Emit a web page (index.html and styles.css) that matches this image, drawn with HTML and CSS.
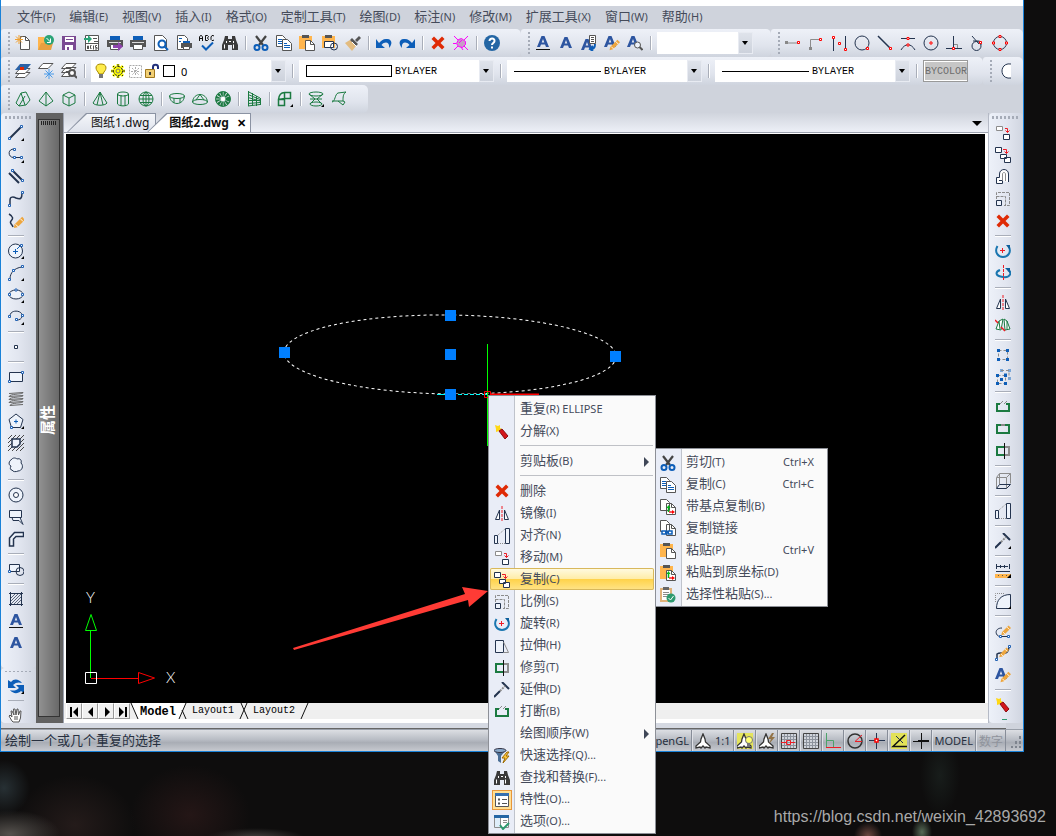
FILE: index.html
```html
<!DOCTYPE html>
<html lang="zh-CN">
<head>
<meta charset="utf-8">
<title>图纸2.dwg</title>
<link rel="stylesheet" href="styles.css">
</head>
<body>
<svg class="defs" aria-hidden="true">
<symbol id="tri" viewBox="0 0 16 16"><path d="M16 13v3h-3z"/></symbol>
<symbol id="new" viewBox="0 0 16 16"><path class="kd fw" d="M5.500 1.500h5l4 4v9h-9z"/><path class="kd" d="M10.500 1.500v4h4"/><path class="ko" d="M4 0v9M0 4.500h8M1 1.500l6 6M7 1.500l-6 6"/></symbol>
<symbol id="open" viewBox="0 0 16 16"><path class="fo" d="M0 2h6l2 2v3h5v3l-2 5H0z"/><path fill="#e8a040" d="M3 8h12l-2 7H0z"/><circle cx="11" cy="5" r="5" fill="#2ba478"/><path class="kw" d="M8.500 3l4 4M12.500 3.500V7.500H9"/></symbol>
<symbol id="save" viewBox="0 0 16 16"><path fill="#7a4a92" d="M1 1h14v14H1z"/><path class="fw" d="M4 2h9v5H4zM4 10h8v5H4z"/><path fill="#7a4a92" d="M5 4h7v1H5zM6 12h2v3H6z"/></symbol>
<symbol id="acis" viewBox="0 0 16 16"><path class="kd fw" d="M1.500 8V.500h13v15h-13z"/><path class="kd" d="M9 3.500h4M10 6.500h4M1 8.500h14"/><path class="kd" d="M3.500 14v-3h1v3M7.500 10.500h-1v3h1M9.500 10.500v4M13 10.500h-1.500v2H13v1.500h-2"/><path fill="#2ba478" d="M0 3h4V0l4 4-4 4V5H0z"/></symbol>
<symbol id="print" viewBox="0 0 16 16"><path fill="#555" d="M0 5h16v7H0z"/><path class="fb" d="M3 1h10v4H3z"/><path class="fw kd" d="M3.500 9.500h9v5h-9z"/><path fill="#ddd" d="M2 7h12v1H2z"/></symbol>
<symbol id="plot" viewBox="0 0 16 16"><use href="#print"/><path fill="#8e44ad" d="M6 10h5V7l5 4.500L11 16v-3H6z"/></symbol>
<symbol id="preview" viewBox="0 0 16 16"><path class="kd fw" d="M1.500.500h8l4 4v11h-12z"/><circle class="kb fw" cx="9" cy="9" r="3.500" stroke-width="2"/><path class="kb" stroke-width="2" d="M11.500 11.500L15 15"/></symbol>
<symbol id="publish" viewBox="0 0 16 16"><path class="kd fw" d="M1.500.500h7l3 3v11h-10z"/><path class="kb" d="M3 3.500h3M3 6.500h2"/><path fill="#555" d="M5 8h11v5H5z"/><path class="fb" d="M7 6h7v2H7z"/><path class="kd fw" d="M7.500 11.500h6v3h-6z"/></symbol>
<symbol id="spell" viewBox="0 0 16 16"><path class="kx" d="M.500 6V2l1-1.500h1l1 1.500v4M.500 3.500h3M6.500.500h2l1 1-1 1.500 1 1.500-1 1h-2zM15 1l-1-.500h-1L12 2v2.500l1 1h1l1-.500"/><path class="kb" stroke-width="2" d="M3 10.500l4 4 7-7"/></symbol>
<symbol id="find" viewBox="0 0 16 16"><path class="fk" d="M3 1h3v3h4V1h3l1 4 2 5v5h-6v-5H6v5H0v-5l2-5z"/><path class="kw" d="M2.500 9.500v4M11.500 9.500v4M7 6.500h2M4.500 6v2M11.500 6v2"/></symbol>
<symbol id="cut" viewBox="0 0 16 16"><path stroke="#444" fill="none" stroke-width="2.200" d="M3 1l7 9M13 1L6 10"/><circle class="kb" cx="4" cy="12.500" r="2.500" stroke-width="2"/><circle class="kb" cx="12" cy="12.500" r="2.500" stroke-width="2"/></symbol>
<symbol id="copy" viewBox="0 0 16 16"><path class="kd fw" d="M.500.500h6l3 3v8h-9z"/><path class="kb" d="M2 4.500h4M2 6.500h4M2 8.500h4"/><path class="kd fw" d="M6.500 4.500h5l4 4v7h-9z"/><path class="kb" d="M8 8.500h3M8 10.500h6M8 12.500h6"/></symbol>
<symbol id="paste" viewBox="0 0 16 16"><path class="fo" d="M0 1h13v13H0z"/><path fill="#555" d="M3 0h7v3H3z"/><path class="kd fw" d="M6.500 5.500h5l4 4v6h-9z"/><path class="kd" d="M11.500 5.500v4h4"/></symbol>
<symbol id="pasteblk" viewBox="0 0 16 16"><path class="fo" d="M0 1h13v12H0z"/><path fill="#555" d="M3 0h7v3H3z"/><path class="kn fw" d="M2.500 6.500h9v6h-9z"/><circle class="kn" cx="12" cy="11.500" r="3.500"/></symbol>
<symbol id="brush" viewBox="0 0 16 16"><path fill="#e3bc80" d="M0 8l5-3 6 6-4 5z"/><path fill="#555" d="M5 5l2-2 6 6-2 2zM10 5l4-4 2 2-4 4z"/><path class="kw" d="M7 7l5 5"/></symbol>
<symbol id="undo" viewBox="0 0 16 16"><path class="fb" d="M0 4v9h9L5.500 10C9 6 14 7 13 13c4-4 3-10-3-9-3 0-5 2-7 4z"/></symbol>
<symbol id="redo" viewBox="0 0 16 16"><use href="#undo" transform="matrix(-1 0 0 1 16 0)"/></symbol>
<symbol id="del" viewBox="0 0 16 16"><path class="fr" d="M1.500 4l2.500-2.500 4 4 4-4L14.500 4l-4 4 4 4-2.500 2.500-4-4-4 4L1.500 12l4-4z"/></symbol>
<symbol id="purge" viewBox="0 0 16 16"><g stroke="#f0f" fill="none"><path fill="#c79cc7" d="M5.500 4.500l3-1 4 3v3l-3 3-4-1-2-3z"/><path d="M1 1l4 4M15 1l-4 4M1 15l4-4M15 15l-4-4M0 8.500h3M8 12l2 3M6 8l3-3"/></g></symbol>
<symbol id="help" viewBox="0 0 16 16"><circle cx="8" cy="8" r="8" fill="#2466a4"/><path class="kw" stroke-width="2" d="M5.500 6C5.500 2.500 11 3 10.500 6c0 2-2.500 2-2.500 4M8 11.500v2"/></symbol>
<symbol id="A" viewBox="0 0 16 16"><path fill="#2d55a0" fill-rule="evenodd" d="M6.500 2h3L14 13h-3l-1-2.500H6L5 13H2zM8 5L6.700 8.500h2.600z"/></symbol>
<symbol id="Au" viewBox="0 0 16 16"><use href="#A" y="-1"/><path class="kx" d="M1 14.500h14"/></symbol>
<symbol id="pen" viewBox="0 0 16 16"><path fill="#eda63f" d="M4 15l1-4 8-8 3 3-8 8z"/><path stroke="#fff" d="M6 11l3 3M11 5l3 3"/></symbol>
<symbol id="Aedit" viewBox="0 0 16 16"><use href="#A" x="-2" y="-1"/><use href="#pen" x="2" y="2" width="14" height="14"/></symbol>
<symbol id="Alist" viewBox="0 0 16 16"><use href="#A" x="-2" y="2"/><path class="kd fw" d="M8.500.500h6v8h-6z"/><path class="kd" d="M10 2.500h3M10 4.500h3M10 6.500h3"/><path class="kb" stroke-width="2" d="M14 9c0 4-1 5-4 5M12 11l-3 3 3 2"/></symbol>
<symbol id="Afind" viewBox="0 0 16 16"><use href="#A" x="-2" y="-1"/><circle class="kd fl" cx="10.500" cy="10" r="3"/><path class="kd" stroke-width="2" d="M12.500 12l3 3"/></symbol>
<symbol id="o1" viewBox="0 0 16 16"><path stroke="#888" d="M1 8h12"/><path fill="#888" d="M0 6h3v3H0z"/><path class="nr" d="M12.500 6.500h2v2h-2z"/></symbol>
<symbol id="o2" viewBox="0 0 16 16"><path class="kk" d="M2.500 13V4.500H12"/><path fill="#888" d="M1 12h3v3H1z"/><path class="nr" d="M11.500 3.500h2v2h-2z"/></symbol>
<symbol id="o3" viewBox="0 0 16 16"><path class="kn" d="M2.500 2v14M14.500 1v14"/><path class="nr" d="M1.500 1.500h2v2h-2zM7.500 7.500h2v2h-2zM13.500 13.500h2v2h-2z"/></symbol>
<symbol id="o4" viewBox="0 0 16 16"><circle class="kn" cx="8" cy="8" r="7"/><path class="nr" d="M12.500 12.500h2v2h-2z"/></symbol>
<symbol id="o5" viewBox="0 0 16 16"><path class="kn" stroke-width="1.500" d="M1 1l12 12"/><path class="nr" d="M12.500 12.500h2v2h-2z"/></symbol>
<symbol id="o6" viewBox="0 0 16 16"><path class="kn" d="M1 3.500h14M1 15c4-7 10-7 14 0"/><path class="nr" d="M7 2.500h2v2H7zM7 9h2v2H7z"/></symbol>
<symbol id="o7" viewBox="0 0 16 16"><circle class="kn" cx="8" cy="8" r="7"/><path class="nr" d="M7 7h2v2H7z"/></symbol>
<symbol id="o8" viewBox="0 0 16 16"><path class="kn" d="M7.500 1v12M0 13.500h16"/><path class="kk" d="M8 9.500h3.500V13"/><path class="nr" d="M6.500 12.500h2v2h-2z"/></symbol>
<symbol id="o9" viewBox="0 0 16 16"><circle class="kn" cx="7.500" cy="11" r="4.500"/><path class="kn" d="M3 1l7 8M4 6h5c3 0 3 2 3 4"/><path class="nr" d="M10.500 6.500h2v2h-2z"/></symbol>
<symbol id="o10" viewBox="0 0 16 16"><circle class="kn" cx="8" cy="8" r="6.500"/><path class="nr" d="M7 .500h2v2H7zM7 13.500h2v2H7zM.500 7h2v2h-2zM13.500 7h2v2h-2z"/></symbol>
<symbol id="arc2" viewBox="0 0 16 16"><path class="kn fw" d="M14 1C2 -1 2 17 14 15"/></symbol>
<symbol id="lay1" viewBox="0 0 16 16"><path class="kd fw" d="M5 9.500h10l-5 5H.500z"/><path class="kd fw" d="M5 5.500h10l-5 5H.500z"/><path fill="#2a62a6" d="M5 1h11l-5 6H0z"/><path class="fr" d="M5 4h4v3H5z"/></symbol>
<symbol id="lay2" viewBox="0 0 16 16"><path class="kd fw" d="M5 .500h10l-5 5H.500z"/><path stroke="#4a9be8" d="M11 6v10M6 11h10M7.500 7.500l7 7M14.500 7.500l-7 7"/></symbol>
<symbol id="lay3" viewBox="0 0 16 16"><path class="kd fw" d="M5 8.500h9l-5 5H.500zM5 4.500h10l-5 5H.500zM5 .500h10l-5 5H.500z"/><circle class="kd fw" cx="11" cy="10" r="3" stroke-width="2"/><path class="kd" stroke-width="2" d="M13 12l3 3"/></symbol>
<symbol id="bulb" viewBox="0 0 16 16"><path fill="#ffec4a" stroke="#a88a00" d="M8 1c-6 0-6 5-3 8l1 2h4l1-2c3-3 3-8-3-8z"/><path fill="#777" d="M6 11h4v4H6z"/></symbol>
<symbol id="sun" viewBox="0 0 16 16"><path stroke="#ff0" stroke-width="3" d="M8 1v14M1 8h14M3 3l10 10M13 3L3 13"/><circle cx="8" cy="8" r="4.500" fill="#ff0" stroke="#222" stroke-dasharray="3 1"/><path stroke="#222" d="M8 1v2M8 13v2M1 8h2M13 8h2M3 3l1 1M12 12l1 1M13 3l-1 1M3 13l1-1"/><circle cx="8" cy="8" r="2" fill="#ff0" stroke="#777"/></symbol>
<symbol id="vp" viewBox="0 0 16 16"><path stroke="#aaa" stroke-dasharray="2 1" fill="none" d="M2.500 2.500h12v12h-12zM8.500 4v9M4 8.500h9M5 5l7 7M12 5l-7 7"/></symbol>
<symbol id="lock" viewBox="0 0 16 16"><path fill="none" stroke="#22307a" stroke-width="2" d="M9 8V4c0-3 5-3 5 0v2"/><path fill="#f2cf74" stroke="#a07820" d="M1.500 6.500h9v8h-9z"/><path class="fk" d="M5 9h2v3H5z"/></symbol>
<symbol id="s1" viewBox="0 0 16 16"><path class="kg" d="M1 12L6 2l5-1 4 8-4 5-7 1zM6 2l4 12M4 15L10 5"/></symbol>
<symbol id="s2" viewBox="0 0 16 16"><path class="kg" d="M8 1L1 10l7 5 7-5zM8 1v14"/></symbol>
<symbol id="s3" viewBox="0 0 16 16"><path class="kg" d="M8 1l6 3v8l-6 3-6-3V4zM2 4l6 3 6-3M8 7v8"/></symbol>
<symbol id="s4" viewBox="0 0 16 16"><path class="kg" d="M8 1L1 12c2 3 12 3 14 0zM8 1L5 14M8 1l3 13"/></symbol>
<symbol id="s5" viewBox="0 0 16 16"><path class="kg" d="M2.500 3v10c2 2.500 9 2.500 11 0V3M6 4v11M10 4v11"/><ellipse class="kg" cx="8" cy="3" rx="5.500" ry="2"/></symbol>
<symbol id="s6" viewBox="0 0 16 16"><circle class="kg" cx="8" cy="8" r="7"/><ellipse class="kg" cx="8" cy="8" rx="3" ry="7"/><path class="kg" d="M8 1v14M1 8h14M2 4.500h12M2 11.500h12"/></symbol>
<symbol id="s7" viewBox="0 0 16 16"><ellipse class="kg" cx="8" cy="5" rx="7.500" ry="2.500"/><path class="kg" d="M.500 5c1 10 14 10 15 0M5 7v5M11 7v5"/></symbol>
<symbol id="s8" viewBox="0 0 16 16"><ellipse class="kg" cx="8" cy="11" rx="7.500" ry="2.500"/><path class="kg" d="M.500 11c1-10 14-10 15 0M8 3.500L4 9M8 3.500L12 9"/></symbol>
<symbol id="s9" viewBox="0 0 16 16"><circle class="kg" cx="8" cy="8" r="5" stroke-width="5" stroke-dasharray="2 .600"/><circle class="kg" cx="8" cy="8" r="7.400"/><circle cx="8" cy="8" r="2" class="fw"/></symbol>
<symbol id="s10" viewBox="0 0 16 16"><path class="kg" d="M2.500 0v15M6.500 2v13M10.500 5v10M14.500 7v7M2 .500l12 6.500M2 3.500l12 5M2 6.500l12 3.500M2 9.500h12M2 12.500l12-1M2 15l12-1.500"/></symbol>
<symbol id="s11" viewBox="0 0 16 16"><path class="kg" stroke-width="1.500" d="M1.500 8.500h6v6h-6zM1.500 8.500C2 4 4 1.500 7.500 1.500h6v6h-6zM7.500 8.500v-7"/><path d="M16 13v3h-3z"/></symbol>
<symbol id="s12" viewBox="0 0 16 16"><ellipse class="kg" cx="8" cy="3" rx="7" ry="2"/><path class="kg" d="M1 3l6 5-5 5M15 3L9 8l5 5M2 8h12"/><ellipse class="kg" cx="8" cy="13" rx="6" ry="2"/></symbol>
<symbol id="s13" viewBox="0 0 16 16"><path class="kg" d="M1 11c3 0 3-8 6-9l8-1c-3 2-3 5-3 9H1M7 10l5 4 2-3-2-1"/></symbol>
<symbol id="line" viewBox="0 0 16 16"><path class="kn" stroke-width="2" d="M2 13L13 2"/><path class="nd" d="M.500 12.500h2v2h-2zM12.500.500h2v2h-2z"/><path d="M16 13v3h-3z"/></symbol>
<symbol id="pline" viewBox="0 0 16 16"><path class="kn" d="M6 2C-1 2 0 11 6 10.500h8"/><path class="nd" d="M5.500 1.500h2v2h-2zM5.500 9.500h2v2h-2zM12.500 9.500h2v2h-2z"/><path d="M16 13v3h-3z"/></symbol>
<symbol id="mline" viewBox="0 0 16 16"><path class="kn" stroke-width="2" d="M1 4l10 10M4 1l10 10"/><path class="nd" d="M3.500.500h2v2h-2zM13.500 10.500h2v2h-2z"/></symbol>
<symbol id="spline" viewBox="0 0 16 16"><path class="kn" stroke-width="1.500" d="M2 14V9c0-4 4-3 6-2 5 2 6 0 6-5"/><path class="nd" d="M.500 13.500h2v2h-2zM13.500.500h2v2h-2z"/></symbol>
<symbol id="sketch" viewBox="0 0 16 16"><path class="kn" stroke-width="1.500" d="M1 1c5 3 4 5 2 7s1 3 2 6"/><use href="#pen" x="2" y="1" width="15" height="15"/></symbol>
<symbol id="circ" viewBox="0 0 16 16"><circle class="kn fl" cx="7.500" cy="8" r="7"/><path class="kb" d="M5 8.500h5M7.500 6v5M9 6l4-4"/><path class="nd" d="M12.500 1.500h2v2h-2z"/><path d="M16 13v3h-3z"/></symbol>
<symbol id="arc" viewBox="0 0 16 16"><path class="kn" d="M2 14C2 8 6 3 14 2"/><path class="nd" d="M.500 13.500h2v2h-2zM4.500 4.500h2v2h-2zM13.500.500h2v2h-2z"/><path d="M16 13v3h-3z"/></symbol>
<symbol id="ell" viewBox="0 0 16 16"><ellipse class="kn fl" cx="8" cy="7.500" rx="7" ry="4.500"/><path class="nd" d="M7 2h2v2h-2zM.500 6.500h2v2h-2zM13.500 6.500h2v2h-2z"/><path d="M16 13v3h-3z"/></symbol>
<symbol id="earc" viewBox="0 0 16 16"><path class="kn" d="M2 7c0-7 13-6 12 0 0 3-3 4-5 4"/><path class="nd" d="M.500 6.500h2v2h-2zM13.500 5.500h2v2h-2zM7.500 9.500h2v2h-2z"/><path d="M16 13v3h-3z"/></symbol>
<symbol id="pt" viewBox="0 0 16 16"><path class="kn fw" d="M6.500 6.500h3v3h-3z"/></symbol>
<symbol id="rect" viewBox="0 0 16 16"><path class="kn fl" d="M1.500 3.500h13v9h-13z"/><path class="nd" d="M.500 11.500h2v2h-2zM13.500 2.500h2v2h-2z"/></symbol>
<symbol id="helix" viewBox="0 0 16 16"><path stroke="#666" fill="none" d="M1 2.500l14-1c1 2-13 1-14 4l14-1c1 2-13 1-14 4l14-1c1 2-13 1-14 4l14-1c1 2-13 1-13 4l13-1"/></symbol>
<symbol id="poly" viewBox="0 0 16 16"><path class="kn fl" d="M8 1l7 5.500L12.500 14.500h-9L1 6.500z"/><path class="kb" d="M6 8.500h4M8 6.500v4"/><path class="nd" d="M2.500 13.500h2v2h-2z"/><path d="M16 13v3h-3z"/></symbol>
<symbol id="region" viewBox="0 0 16 16"><path stroke="#444" fill="none" d="M0 4l4-4M0 8l8-8M0 12L12 0M0 16L16 0M4 16L16 4M8 16l8-8M12 16l4-4"/><path class="kn fl" stroke-width="1.500" d="M4 4h8v5l-3 3H4z"/></symbol>
<symbol id="cloud" viewBox="0 0 16 16"><path class="kn fl" d="M3 3c2-3 5-2 6-1 3-1 5 1 4 4 3 3 1 8-3 8-2 1-5 1-6-1-2 0-2-2-1-4-3-1-2-5 0-6z"/></symbol>
<symbol id="donut" viewBox="0 0 16 16"><circle class="kn fl" cx="8" cy="8" r="7"/><circle class="kn fw" cx="8" cy="8" r="2.500"/></symbol>
<symbol id="solid" viewBox="0 0 16 16"><path class="kn fl" d="M1.500 1.500h12v7h-12zM4 8.500l1 3h6l4 4-3-7"/></symbol>
<symbol id="wall" viewBox="0 0 16 16"><path class="kn fl" stroke-width="1.500" d="M1.500 15V7l5-5.500h9v4H8L5.500 8v7z"/></symbol>
<symbol id="bnd" viewBox="0 0 16 16"><path class="kn fl" d="M1.500 3.500h10v7h-10z"/><circle class="kn" cx="12" cy="10.500" r="4"/><path class="nd" d="M.500 9.500h2v2h-2z"/></symbol>
<symbol id="hatch" viewBox="0 0 16 16"><path class="kn" d="M2.500 1v14M13.500 1v14M1 2.500h14M1 13.500h14"/><path stroke="#5a667c" d="M3 7l4-4M3 10l7-7M3 13l10-10M6 13l7-7M9 13l4-4"/></symbol>
<symbol id="sync" viewBox="0 0 16 16"><path class="fb" d="M0 2v8h8L5 7c3-3 6-3 9-2-3-4-8-5-11-1z"/><path class="fb" d="M16 15V7H8l3 3c-3 3-6 3-9 2 3 4 8 4 11 1z"/></symbol>
<symbol id="hand" viewBox="0 0 16 16"><path class="kd fw" d="M4 14L1 9l1-1 2 2-1-6h1l2 4-.500-6h1.500l1 6 1-6h1l.500 6L12 4h1l-.500 7L11 15H5zM7 9v4M9 9v4"/></symbol>
<symbol id="move" viewBox="0 0 16 16"><path class="kk fw" d="M1.500 1.500h6v4h-6z"/><path class="kn fw" d="M8.500 9.500h6v5h-6z"/><path class="kr" d="M10 3.500h2.500v4M10.500 5.500l2 2 2-2"/></symbol>
<symbol id="cpy" viewBox="0 0 16 16"><path class="kn fw" d="M.500.500h6v5h-6zM5.500 7.500h6v4h-6zM9.500 10.500h6v5h-6z"/><path class="kr" d="M8 2.500h3.500v4M9.500 4.500l2 2 2-2"/></symbol>
<symbol id="offset" viewBox="0 0 16 16"><path class="kn fw" d="M13.500 13V5c0-6-9-6-9 0v3.500h-3v6h6v-3H4"/><path class="kk" d="M10.500 12V5c0-2-3-2-3 0v6.500"/></symbol>
<symbol id="scale" viewBox="0 0 16 16"><path class="kk" stroke-dasharray="3 1" d="M1.500 8V1.500h13v13H9M1.500 5.500h9v9"/><path class="kn fl" d="M1.500 9.500h5v5h-5z"/></symbol>
<symbol id="rot" viewBox="0 0 16 16"><path class="kt" stroke-width="2" d="M2.500 3C-1 9 3 14 8 14s9-5 5.500-11"/><path class="ft" d="M11 2h4v5z"/><path class="kr" d="M5 7.500h5M7.500 5v5"/></symbol>
<symbol id="rot3" viewBox="0 0 16 16"><path class="kt" stroke-width="2" d="M5 5C0 7 0 11 8 12s9-5 5-7"/><path class="ft" d="M10 3h5v5z"/><path class="kr" stroke-dasharray="3 1" d="M8.500 0v16"/></symbol>
<symbol id="mirror" viewBox="0 0 16 16"><path class="kn fw" d="M5.500 4v9.500h-4zM10.500 4v9.500h4z"/><path class="kr" stroke-dasharray="3 1" d="M8 0v16"/></symbol>
<symbol id="mir3" viewBox="0 0 16 16"><path class="kg fw" d="M1 12l3-8 4-2-2 11zM15 12l-3-8-3-2 1 11zM4 4l1 8M12 4l0 8"/><path class="kr" stroke-width="1.500" d="M0 3l3 3M6 10l4 4"/></symbol>
<symbol id="grp" viewBox="0 0 16 16"><path class="kk" stroke-dasharray="3 2" d="M3.500 3.500h9v9h-9z"/><path class="fb" d="M2 2h3v3H2zM11 2h3v3h-3zM2 11h3v3H2zM11 11h3v3h-3z"/></symbol>
<symbol id="grp2" viewBox="0 0 16 16"><path fill="#7aa7d8" d="M5 0h3v3H5zM13 0h3v3h-3zM13 8h3v3h-3zM9 4h3v3H9z"/><path class="kk" stroke-dasharray="3 2" d="M2.500 6.500h8v8h-8zM6 1.500h8v8"/><path class="fb" d="M1 5h3v3H1zM9 5h3v3H9zM1 13h3v3H1zM9 13h3v3H9zM5 9h3v3H5z"/></symbol>
<symbol id="brk" viewBox="0 0 16 16"><path class="kg" stroke-width="2" d="M5 5H2v7h12V5h-3"/><path class="kk" d="M5 5l3-3M9 5l3-3"/></symbol>
<symbol id="brk1" viewBox="0 0 16 16"><path class="kg" stroke-width="2" d="M2 4h12v8H2z"/><path fill="#888" d="M6 3h4v2H6z"/></symbol>
<symbol id="trim" viewBox="0 0 16 16"><path class="kg" stroke-width="2" d="M9 4H2v8h7"/><path class="kk" stroke-width="2" d="M10 4h4v8h-4"/><path class="kx" d="M9.500 0v16"/></symbol>
<symbol id="box" viewBox="0 0 16 16"><path class="kk" d="M1.500 4.500h10v11M1.500 4.500l3-4h11v10M11.500 4.500l4-4M4.500 1v10M1.500 5v10"/><path class="kn" d="M1.500 15.500h10l4-4h-11z"/></symbol>
<symbol id="align" viewBox="0 0 16 16"><path class="kn fl" d="M.500 7.500h3v8h-3zM11.500.500h4v15h-4z"/><path class="kk" stroke-dasharray="1 1" d="M4 7l7-6M4 15.500h7"/></symbol>
<symbol id="ext" viewBox="0 0 16 16"><path class="kn" stroke-width="2" d="M0 15l6-6M8 0l7 7"/><path class="kk" stroke-dasharray="2 1" stroke-width="2" d="M6 9l5-5"/></symbol>
<symbol id="meas" viewBox="0 0 16 16"><path class="kn" d="M1.500 1v5M5.500 2v3M9.500 2v3M14.500 1v5M1 8.500h14"/><path class="kn" stroke-dasharray="3 1" d="M2 3.500h12"/><path class="fo" d="M0 11h16v4H0z"/><path class="kd" d="M3.500 12v1M7.500 12v1M11.500 12v1"/><path d="M16 11v4h-4z"/></symbol>
<symbol id="fillet" viewBox="0 0 16 16"><path class="kn fl" d="M1.500 15.500C1.500 7 6 1.500 15.500 1.500v14z"/><path class="kk" stroke-dasharray="1 1" d="M.500 9V.500H9"/><path d="M16 13v3h-3z"/></symbol>
<symbol id="pedit" viewBox="0 0 16 16"><path class="kn" d="M7 5C-1 5 0 13 5 13.500h8"/><path class="nd" d="M4.500 12.500h2v2h-2zM12.500 12.500h2v2h-2z"/><use href="#pen" x="3" y="0" width="13" height="13"/></symbol>
<symbol id="sedit" viewBox="0 0 16 16"><path class="kn" stroke-width="1.500" d="M2 15V9c4-3 11 3 12-7"/><use href="#pen" x="1" y="0" width="13" height="13"/><path class="nd" d="M.500 13.500h2v2h-2zM13.500.500h2v2h-2z"/></symbol>
<symbol id="expl" viewBox="0 0 16 16"><path fill="#ffd814" d="M1 1l3 1 2-1v3l2 1-3 2-3 1V5z"/><path fill="#d4161c" stroke="#8c0d10" d="M5 7l3-2 6 7-3 3z"/></symbol>
<symbol id="stretch" viewBox="0 0 16 16"><path class="kn fl" d="M1.500 2.500h8v12h-8z"/><path class="kk" d="M9.500 4l5 10.500h-5"/></symbol>
<symbol id="qsel" viewBox="0 0 16 16"><path fill="#4b6f96" d="M0 2h12L7 8v7l-3-2V8z"/><ellipse cx="6" cy="2.500" rx="6" ry="2" fill="#89a9c9" stroke="#334"/><path fill="#ffc83c" stroke="#9c6a00" d="M13 4L8 10h3l-2 5 6-7h-3l3-4z"/></symbol>
<symbol id="prop" viewBox="0 0 16 16"><path class="kd fw" d="M1.500 1.500h13v13h-13z"/><path fill="#356fb0" d="M1 1h14v3H1z"/><path class="kd" d="M4 7.500h2M4 11.500h2" stroke-width="2"/><path class="kd" d="M8 7.500h5M8 11.500h5"/></symbol>
<symbol id="opt" viewBox="0 0 16 16"><path class="kk fw" d="M.500 1.500h14v12H.500z"/><path fill="#2466a4" d="M0 1h15v3H0z"/><path fill="#dfeefa" d="M1 4h5v9H1z"/><path class="kk" d="M6.500 4v9M9 6.500h4M9 8.500h4"/><path class="kc" d="M6 11l3 4 6-6"/></symbol>
<symbol id="pages" viewBox="0 0 16 16"><path class="kd fw" d="M.500.500h6l3 3v8h-9zM6.500 4.500h5l4 4v7h-9z"/><path class="kd" d="M11.500 4.500v4h4"/></symbol>
<symbol id="ucs" viewBox="0 0 16 16"><path stroke="#00b818" stroke-width="1.500" fill="none" d="M8.500 13V8"/><path fill="#00b818" d="M6.500 9l2-3 2 3z"/><path class="kr" stroke-width="1.500" d="M9 13h4"/><path fill="red" d="M12 11l3 2-3 2z"/></symbol>
<symbol id="cbase" viewBox="0 0 16 16"><use href="#pages"/><use href="#ucs"/></symbol>
<symbol id="clink" viewBox="0 0 16 16"><use href="#pages"/><path fill="#fff" stroke="#0d5eb8" stroke-width="1.500" d="M2 11h4v3H2zM8 11h4v3H8zM5 12.500h4"/></symbol>
<symbol id="porig" viewBox="0 0 16 16"><use href="#paste"/><use href="#ucs"/></symbol>
<symbol id="pspec" viewBox="0 0 16 16"><path fill="#dfb27a" d="M0 1h12v14H0z"/><path class="fw" d="M2 3h8v10H2z"/><path fill="#666" d="M3 0h6v3H3z"/><path class="kk" d="M3 5.500h6M3 7.500h6M3 9.500h4"/><circle cx="11" cy="11" r="4.500" fill="#2e9a70"/><path class="kw" d="M8.500 11l2 2 3-4"/></symbol>
<symbol id="anno" viewBox="0 0 16 16"><path fill="#fff" stroke="#333" stroke-width="1.300" d="M8 1l-2 5-.500 3L1 13v2l4-1 1 1 2-2 2 2 1-1 4 1v-2l-4.500-4L10 6z"/></symbol>
<symbol id="annov" viewBox="0 0 16 16"><path fill="#e4e45c" d="M0 0h16v16H0z"/><use href="#anno" x="-1"/><circle cx="12" cy="7" r="3.500" fill="#ffff70" stroke="#777"/><path fill="#777" d="M10 10h3v4h-3z"/></symbol>
<symbol id="annoa" viewBox="0 0 16 16"><use href="#anno" x="-1"/><path fill="#927347" d="M13 0l-4 6h3l-2 5 6-7h-3l2-4z"/></symbol>
<symbol id="grid" viewBox="0 0 16 16"><path fill="#d0d4db" stroke="#444" d="M.500.500h15v15H.500z"/><path stroke="#8d939d" d="M3.500 1v14M6.500 1v14M9.500 1v14M12.500 1v14M1 3.500h14M1 6.500h14M1 9.500h14M1 12.500h14"/></symbol>
<symbol id="snap" viewBox="0 0 16 16"><use href="#grid"/><path class="kr" d="M0 9.500h5M10 9.500h4M5.500 7.500h4v4h-4z"/></symbol>
<symbol id="ortho" viewBox="0 0 16 16"><path stroke="#4ca36a" d="M1.500 0v14"/><path stroke="#4ca36a" fill="none" d="M2 7.500h6.500V14"/><path class="kr" d="M1 14.500h15"/></symbol>
<symbol id="polar" viewBox="0 0 16 16"><circle cx="8" cy="8" r="7" fill="none" stroke="#333" stroke-width="1.500"/><path class="kr" d="M15 2L8 8.500h7"/></symbol>
<symbol id="osnap" viewBox="0 0 16 16"><path class="kn" d="M7.500 0v16M0 7.500h16"/><path class="nr" stroke-width="1.500" d="M6 6h3v3H6z"/></symbol>
<symbol id="otrack" viewBox="0 0 16 16"><path fill="#e2e258" d="M0 0h16v16H0z"/><path class="kx" d="M14 2L2 13.500h14" stroke-width="1.500"/><path class="kn" d="M5 3l7 7"/></symbol>
<symbol id="lwt" viewBox="0 0 16 16"><path class="kx" d="M8.500 0v16M0 8.500h5"/><path class="kx" stroke-width="2" d="M5 8h11"/></symbol>
</svg>

<main class="app">
  <nav class="menubar">
    <button>文件<small>(F)</small></button><button>编辑<small>(E)</small></button><button>视图<small>(V)</small></button><button>插入<small>(I)</small></button><button>格式<small>(O)</small></button><button>定制工具<small>(T)</small></button><button>绘图<small>(D)</small></button><button>标注<small>(N)</small></button><button>修改<small>(M)</small></button><button>扩展工具<small>(X)</small></button><button>窗口<small>(W)</small></button><button>帮助<small>(H)</small></button>
  </nav>

  <div class="row">
    <div class="bar std">
      <i class="grip"></i>
      <button class="tb" aria-label="新建"><svg><use href="#new"/></svg></button>
      <button class="tb" aria-label="打开"><svg><use href="#open"/></svg></button>
      <button class="tb" aria-label="保存"><svg><use href="#save"/></svg></button>
      <button class="tb" aria-label="输出"><svg><use href="#acis"/></svg></button>
      <button class="tb" aria-label="绘图输出"><svg><use href="#plot"/></svg></button>
      <button class="tb" aria-label="打印"><svg><use href="#print"/></svg></button>
      <button class="tb" aria-label="预览"><svg><use href="#preview"/></svg></button>
      <button class="tb" aria-label="页面设置"><svg><use href="#publish"/></svg></button>
      <button class="tb" aria-label="拼写"><svg><use href="#spell"/></svg></button>
      <button class="tb" aria-label="查找"><svg><use href="#find"/></svg></button>
      <i class="sep"></i>
      <button class="tb" aria-label="剪切"><svg><use href="#cut"/></svg></button>
      <button class="tb" aria-label="复制"><svg><use href="#copy"/></svg></button>
      <button class="tb" aria-label="粘贴"><svg><use href="#paste"/></svg></button>
      <button class="tb" aria-label="粘贴为块"><svg><use href="#pasteblk"/></svg></button>
      <button class="tb" aria-label="格式刷"><svg><use href="#brush"/></svg></button>
      <i class="sep"></i>
      <button class="tb" aria-label="撤销"><svg><use href="#undo"/></svg></button>
      <button class="tb" aria-label="重做"><svg><use href="#redo"/></svg></button>
      <i class="sep"></i>
      <button class="tb" aria-label="删除"><svg><use href="#del"/></svg></button>
      <button class="tb" aria-label="清理"><svg><use href="#purge"/></svg></button>
      <i class="sep"></i>
      <button class="tb" aria-label="帮助"><svg><use href="#help"/></svg></button>
    </div>
    <div class="bar text">
      <i class="grip"></i>
      <button class="tb" aria-label="多行文字"><svg><use href="#Au"/></svg></button>
      <button class="tb" aria-label="单行文字"><svg><use href="#A"/></svg></button>
      <button class="tb" aria-label="文字样式"><svg><use href="#Alist"/></svg></button>
      <button class="tb" aria-label="编辑文字"><svg><use href="#Aedit"/></svg></button>
      <button class="tb" aria-label="查找文字"><svg><use href="#Afind"/></svg></button>
      <i class="sep"></i>
      <span class="combo short"><select aria-label="文字样式"><option></option></select><i class="drop"></i></span>
    </div>
    <div class="bar fill">
      <i class="grip"></i>
      <button class="tb" aria-label="临时追踪"><svg><use href="#o1"/></svg></button>
      <button class="tb" aria-label="捕捉自"><svg><use href="#o2"/></svg></button>
      <button class="tb" aria-label="中点"><svg><use href="#o3"/></svg></button>
      <button class="tb" aria-label="最近点"><svg><use href="#o4"/></svg></button>
      <button class="tb" aria-label="端点"><svg><use href="#o5"/></svg></button>
      <button class="tb" aria-label="外观交点"><svg><use href="#o6"/></svg></button>
      <button class="tb" aria-label="圆心"><svg><use href="#o7"/></svg></button>
      <button class="tb" aria-label="垂足"><svg><use href="#o8"/></svg></button>
      <button class="tb" aria-label="切点"><svg><use href="#o9"/></svg></button>
      <button class="tb" aria-label="象限点"><svg><use href="#o10"/></svg></button>
    </div>
  </div>

  <div class="row">
    <div class="bar props">
      <i class="grip"></i>
      <button class="tb" aria-label="图层"><svg><use href="#lay1"/></svg></button>
      <button class="tb" aria-label="冻结图层"><svg><use href="#lay2"/></svg></button>
      <button class="tb" aria-label="图层浏览"><svg><use href="#lay3"/></svg></button>
      <i class="sep"></i>
      <span class="combo layer"><select aria-label="当前图层"><option>0</option></select>
        <span class="swatch"><svg><use href="#bulb"/></svg><svg><use href="#sun"/></svg><svg><use href="#vp"/></svg><svg><use href="#lock"/></svg><i class="box"></i></span><i class="drop"></i></span>
      <i class="sep"></i>
      <span class="combo color"><select aria-label="颜色"><option>BYLAYER</option></select><span class="swatch"><i class="box wide"></i></span><i class="drop"></i></span>
      <i class="sep"></i>
      <span class="combo line"><select aria-label="线型"><option>BYLAYER</option></select><span class="swatch"><i class="rule"></i></span><i class="drop"></i></span>
      <i class="sep"></i>
      <span class="combo line"><select aria-label="线宽"><option>BYLAYER</option></select><span class="swatch"><i class="rule"></i></span><i class="drop"></i></span>
      <i class="sep"></i>
      <input class="plotstyle" aria-label="打印样式" value="BYCOLOR" disabled>
    </div>
    <div class="bar fill">
      <i class="grip"></i>
      <button class="tb" aria-label="圆弧"><svg><use href="#arc2"/></svg></button>
    </div>
  </div>

  <div class="row">
    <div class="bar surf">
      <i class="grip"></i>
      <button class="tb" aria-label="楔体"><svg><use href="#s1"/></svg></button>
      <button class="tb" aria-label="棱锥"><svg><use href="#s2"/></svg></button>
      <button class="tb" aria-label="长方体"><svg><use href="#s3"/></svg></button>
      <i class="sep"></i>
      <button class="tb" aria-label="圆锥"><svg><use href="#s4"/></svg></button>
      <button class="tb" aria-label="圆柱"><svg><use href="#s5"/></svg></button>
      <button class="tb" aria-label="球体"><svg><use href="#s6"/></svg></button>
      <i class="sep"></i>
      <button class="tb" aria-label="下半球"><svg><use href="#s7"/></svg></button>
      <button class="tb" aria-label="上半球"><svg><use href="#s8"/></svg></button>
      <button class="tb" aria-label="圆环"><svg><use href="#s9"/></svg></button>
      <i class="sep"></i>
      <button class="tb" aria-label="网格"><svg><use href="#s10"/></svg></button>
      <i class="sep"></i>
      <button class="tb" aria-label="三维面"><svg><use href="#s11"/></svg></button>
      <i class="sep"></i>
      <button class="tb" aria-label="旋转曲面"><svg><use href="#s12"/><use href="#tri"/></svg></button>
      <button class="tb" aria-label="边界曲面"><svg><use href="#s13"/></svg></button>
    </div>
  </div>

  <div class="work">
    <div class="side">
      <div class="vbar">
        <i class="vgrip"></i>
        <button class="tb" aria-label="直线"><svg><use href="#line"/></svg></button>
        <button class="tb" aria-label="多段线"><svg><use href="#pline"/></svg></button>
        <button class="tb" aria-label="多线"><svg><use href="#mline"/></svg></button>
        <button class="tb" aria-label="样条曲线"><svg><use href="#spline"/></svg></button>
        <button class="tb" aria-label="徒手画"><svg><use href="#sketch"/></svg></button>
        <i class="vsep"></i>
        <button class="tb" aria-label="圆"><svg><use href="#circ"/></svg></button>
        <button class="tb" aria-label="圆弧"><svg><use href="#arc"/></svg></button>
        <button class="tb" aria-label="椭圆"><svg><use href="#ell"/></svg></button>
        <button class="tb" aria-label="椭圆弧"><svg><use href="#earc"/></svg></button>
        <i class="vsep"></i>
        <button class="tb" aria-label="点"><svg><use href="#pt"/></svg></button>
        <i class="vsep"></i>
        <button class="tb" aria-label="矩形"><svg><use href="#rect"/></svg></button>
        <button class="tb" aria-label="螺旋"><svg><use href="#helix"/></svg></button>
        <button class="tb" aria-label="多边形"><svg><use href="#poly"/></svg></button>
        <button class="tb" aria-label="面域"><svg><use href="#region"/></svg></button>
        <button class="tb" aria-label="云线"><svg><use href="#cloud"/></svg></button>
        <i class="vsep"></i>
        <button class="tb" aria-label="圆环"><svg><use href="#donut"/></svg></button>
        <button class="tb" aria-label="实体"><svg><use href="#solid"/></svg></button>
        <button class="tb" aria-label="轨迹"><svg><use href="#wall"/></svg></button>
        <i class="vsep"></i>
        <button class="tb" aria-label="边界"><svg><use href="#bnd"/></svg></button>
        <i class="vsep"></i>
        <button class="tb" aria-label="填充"><svg><use href="#hatch"/></svg></button>
        <button class="tb" aria-label="多行文字"><svg><use href="#Au"/></svg></button>
        <button class="tb" aria-label="文字"><svg><use href="#A"/></svg></button>
      </div>
      <div class="vbar end">
        <i class="vgrip"></i>
        <button class="tb" aria-label="重画"><svg><use href="#sync"/><use href="#tri"/></svg></button>
        <i class="vsep"></i>
        <button class="tb" aria-label="平移"><svg><use href="#hand"/></svg></button>
      </div>
    </div>

    <aside class="palette"><div class="palette-in"><i class="dots"></i><h2>属性</h2></div></aside>

    <section class="doc">
      <div class="tabs">
        <button class="tab">图纸1.dwg</button>
        <button class="tab on">图纸2.dwg<span class="x">✕</span></button>
        <i class="tabmenu"></i>
      </div>
      <div class="canvas">
        <svg role="img" aria-label="椭圆">
          <g transform="translate(-66 -134)">
            <ellipse cx="450" cy="354.500" rx="166" ry="39.500" transform="rotate(.7 450 354.500)" fill="none" stroke="#fff" stroke-dasharray="3 3"/>
            <path stroke="#0f0" d="M487.500 344v102"/>
            <path stroke="#0ff" d="M437 394.500h50"/>
            <path stroke="#000" stroke-dasharray="2 4" d="M456 394.500h30"/>
            <path stroke="red" stroke-width="2" d="M490 394.500h49"/>
            <path fill="none" stroke="red" d="M484.500 391.500h6v6h-6z"/>
            <path fill="#007fff" d="M279 347h11v11h-11zM610 351h11v11h-11zM445 310h11v11h-11zM445 349h11v11h-11zM445 389h11v11h-11z"/>
            <path fill="none" stroke="#0f0" d="M90.500 678v-48M85.500 630.500h11l-5.500-16z"/>
            <path fill="none" stroke="red" d="M91 678.500h47M138.500 672.500v11l16-5.500z"/>
            <path fill="none" stroke="#fff" d="M85.500 672.500h11v11h-11z"/>
            <text x="86" y="603">Y</text><text x="166" y="683">X</text>
            <path fill="#ff3b35" d="M293 648L465 594l-3-7 26 4-19 16-1-7L294 650z"/>
          </g>
        </svg>
      </div>
      <div class="sheets">
        <button class="nav" aria-label="第一个"><svg><path d="M3 3h2v10H3zM11 3v10L6 8z"/></svg></button>
        <button class="nav" aria-label="上一个"><svg><path d="M10 3v10L5 8z"/></svg></button>
        <button class="nav" aria-label="下一个"><svg><path d="M6 3v10l5-5z"/></svg></button>
        <button class="nav" aria-label="最后一个"><svg><path d="M4 3v10l5-5zM10 3h2v10h-2z"/></svg></button>
        <svg class="slash"><path class="page" d="M1 0l7 16h2V0z"/><path d="M1 0l7 16"/></svg>
        <button class="sheet on">Model</button>
        <svg class="slash wide"><path class="page" d="M0 0v16h3L10 0z"/><path d="M3 16L10 0M6 7l4 9"/></svg>
        <button class="sheet">Layout1</button>
        <svg class="slash wide"><path d="M3 16L10 0M4 0l7 16"/></svg>
        <button class="sheet">Layout2</button>
        <svg class="slash wide"><path d="M3 16L10 0"/></svg>
      </div>
    </section>

    <div class="side right">
      <div class="vbar">
        <i class="vgrip"></i>
        <button class="tb" aria-label="移动"><svg><use href="#move"/></svg></button>
        <button class="tb" aria-label="复制"><svg><use href="#cpy"/></svg></button>
        <button class="tb" aria-label="偏移"><svg><use href="#offset"/></svg></button>
        <button class="tb" aria-label="比例"><svg><use href="#scale"/></svg></button>
        <button class="tb" aria-label="删除"><svg><use href="#del"/></svg></button>
        <i class="vsep"></i>
        <button class="tb" aria-label="旋转"><svg><use href="#rot"/></svg></button>
        <button class="tb" aria-label="三维旋转"><svg><use href="#rot3"/></svg></button>
        <i class="vsep"></i>
        <button class="tb" aria-label="镜像"><svg><use href="#mirror"/></svg></button>
        <button class="tb" aria-label="三维镜像"><svg><use href="#mir3"/></svg></button>
        <i class="vsep"></i>
        <button class="tb" aria-label="阵列"><svg><use href="#grp"/></svg></button>
        <button class="tb" aria-label="三维阵列"><svg><use href="#grp2"/></svg></button>
        <i class="vsep"></i>
        <button class="tb" aria-label="打断"><svg><use href="#brk"/></svg></button>
        <button class="tb" aria-label="打断于点"><svg><use href="#brk1"/></svg></button>
        <button class="tb" aria-label="修剪"><svg><use href="#trim"/></svg></button>
        <i class="vsep"></i>
        <button class="tb" aria-label="拉伸"><svg><use href="#box"/></svg></button>
        <i class="vsep"></i>
        <button class="tb" aria-label="对齐"><svg><use href="#align"/></svg></button>
        <i class="vsep"></i>
        <button class="tb" aria-label="延伸"><svg><use href="#ext"/><use href="#tri"/></svg></button>
        <i class="vsep"></i>
        <button class="tb" aria-label="等分"><svg><use href="#meas"/></svg></button>
        <i class="vsep"></i>
        <button class="tb" aria-label="圆角"><svg><use href="#fillet"/></svg></button>
        <i class="vsep"></i>
        <button class="tb" aria-label="编辑多段线"><svg><use href="#pedit"/></svg></button>
        <button class="tb" aria-label="编辑样条"><svg><use href="#sedit"/></svg></button>
        <button class="tb" aria-label="编辑文字"><svg><use href="#Aedit"/></svg></button>
        <i class="vsep"></i>
        <button class="tb" aria-label="分解"><svg><use href="#expl"/></svg></button>
        <i class="more"></i>
      </div>
    </div>
  </div>

  <div class="strip"></div>
  <footer class="status">
    <span class="hint">绘制一个或几个重复的选择</span>
    <button class="cell">OpenGL</button>
    <button class="cell scale"><svg><use href="#anno"/></svg>1:1</button>
    <button class="cell" aria-label="注释可见性"><svg><use href="#annov"/></svg></button>
    <button class="cell" aria-label="自动缩放"><svg><use href="#annoa"/></svg></button>
    <button class="cell" aria-label="捕捉"><svg><use href="#snap"/></svg></button>
    <button class="cell" aria-label="栅格"><svg><use href="#grid"/></svg></button>
    <button class="cell" aria-label="正交"><svg><use href="#ortho"/></svg></button>
    <button class="cell" aria-label="极轴"><svg><use href="#polar"/></svg></button>
    <button class="cell" aria-label="对象捕捉"><svg><use href="#osnap"/></svg></button>
    <button class="cell" aria-label="追踪"><svg><use href="#otrack"/></svg></button>
    <button class="cell" aria-label="线宽"><svg><use href="#lwt"/></svg></button>
    <button class="cell">MODEL</button>
    <button class="cell off">数字</button>
    <svg class="size"><path d="M12 3h2v3h-2zM8 8h2v3H8zM12 8h2v3h-2zM4 13h2v2H4zM8 13h2v2H8zM12 13h2v2h-2z"/></svg>
  </footer>
</main>

<div class="menu main-menu" role="menu">
  <button role="menuitem"><i></i><span>重复<small>(R) ELLIPSE</small></span></button>
  <button role="menuitem"><svg><use href="#expl"/></svg><span>分解<small>(X)</small></span></button>
  <hr>
  <button role="menuitem"><i></i><span>剪贴板<small>(B)</small></span><b class="sub"></b></button>
  <hr>
  <button role="menuitem"><svg><use href="#del"/></svg><span>删除</span></button>
  <button role="menuitem"><svg><use href="#mirror"/></svg><span>镜像<small>(I)</small></span></button>
  <button role="menuitem"><svg><use href="#align"/></svg><span>对齐<small>(N)</small></span></button>
  <button role="menuitem"><svg><use href="#move"/></svg><span>移动<small>(M)</small></span></button>
  <button role="menuitem" class="hot"><svg><use href="#cpy"/></svg><span>复制<small>(C)</small></span></button>
  <button role="menuitem"><svg><use href="#scale"/></svg><span>比例<small>(S)</small></span></button>
  <button role="menuitem"><svg><use href="#rot"/></svg><span>旋转<small>(R)</small></span></button>
  <button role="menuitem"><svg><use href="#stretch"/></svg><span>拉伸<small>(H)</small></span></button>
  <button role="menuitem"><svg><use href="#trim"/></svg><span>修剪<small>(T)</small></span></button>
  <button role="menuitem"><svg><use href="#ext"/></svg><span>延伸<small>(D)</small></span></button>
  <button role="menuitem"><svg><use href="#brk"/></svg><span>打断<small>(B)</small></span></button>
  <button role="menuitem"><i></i><span>绘图顺序<small>(W)</small></span><b class="sub"></b></button>
  <button role="menuitem"><svg><use href="#qsel"/></svg><span>快速选择<small>(Q)...</small></span></button>
  <button role="menuitem"><svg><use href="#find"/></svg><span>查找和替换<small>(F)...</small></span></button>
  <button role="menuitem"><svg class="checked"><use href="#prop"/></svg><span>特性<small>(O)...</small></span></button>
  <button role="menuitem"><svg><use href="#opt"/></svg><span>选项<small>(O)...</small></span></button>
</div>

<div class="menu sub-menu" role="menu">
  <button role="menuitem"><svg><use href="#cut"/></svg><span>剪切<small>(T)</small></span><kbd>Ctrl+X</kbd></button>
  <button role="menuitem"><svg><use href="#copy"/></svg><span>复制<small>(C)</small></span><kbd>Ctrl+C</kbd></button>
  <button role="menuitem"><svg><use href="#cbase"/></svg><span>带基点复制<small>(B)</small></span></button>
  <button role="menuitem"><svg><use href="#clink"/></svg><span>复制链接</span></button>
  <button role="menuitem"><svg><use href="#paste"/></svg><span>粘贴<small>(P)</small></span><kbd>Ctrl+V</kbd></button>
  <button role="menuitem"><svg><use href="#porig"/></svg><span>粘贴到原坐标<small>(D)</small></span></button>
  <button role="menuitem"><svg><use href="#pspec"/></svg><span>选择性粘贴<small>(S)...</small></span></button>
</div>

<p class="mark">https://blog.csdn.net/weixin_42893692</p>
</body>
</html>
```
FILE: styles.css
```css
* { box-sizing: border-box; }
html, body { margin: 0; }
body {
  position: relative;
  display: flex;
  flex-direction: column;
  min-height: 100vh;
  padding: 0 32px 84px 0;
  overflow: hidden;
  font: 13px "Noto Sans", "Noto Sans CJK SC", sans-serif;
  color: #454b5a;
  background:
    radial-gradient(ellipse 10px 14px at 922px 832px, #566b56, transparent),
    radial-gradient(ellipse 14px 14px at 868px 836px, #6d4840, transparent),
    radial-gradient(ellipse 20px 40px at 940px 775px, #181d1b, transparent),
    radial-gradient(ellipse 26px 28px at 4px 788px, #273034, transparent),
    radial-gradient(ellipse 50px 24px at 10px 834px, #55514d, transparent),
    radial-gradient(ellipse 60px 50px at 75px 825px, #241b1a, transparent),
    radial-gradient(ellipse 60px 50px at 190px 815px, #241616, transparent),
    radial-gradient(ellipse 50px 10px at 255px 838px, #45413f, transparent),
    #0e0d0d;
}
button, input, select { font: inherit; color: inherit; }
button { border: 0; padding: 0; background: none; }
small { font-size: 11px; }
.defs { display: none; }

/* icon paint */
.fw { fill: #fff; }
.fl { fill: #eef3fb; }
.fo { fill: #ffb54d; }
.fb { fill: #0d5eb8; }
.fr { fill: #df2a05; }
.fk { fill: #3a3a3a; }
.ft { fill: #0d5f9c; }
.kd { stroke: #555; }
.kn { stroke: #24344f; }
.kk { stroke: #8c8c8c; }
.kb { stroke: #0d5eb8; }
.kg { stroke: #1b7a41; }
.kr { stroke: #ee1c25; }
.kx { stroke: #111; }
.kw { stroke: #fff; }
.ko { stroke: #f0a030; }
.kt { stroke: #1a76b0; }
.kc { stroke: #2e9a70; stroke-width: 2; }
.kd:not(.fw):not(.fl), .kn:not(.fw):not(.fl), .kk:not(.fw), .kb:not(.fw), .kg:not(.fw), .kr, .kx, .kw, .ko, .kt, .kc { fill: none; }
.nd { fill: #fff; stroke: #2263b4; }
.nr { fill: #fff; stroke: red; }

.app {
  flex: 1;
  display: flex;
  flex-direction: column;
  border: solid #1a82d8;
  border-width: 0 1px 1px;
  background: #cfd3dc;
}
.menubar {
  display: flex;
  gap: 14px;
  height: 29px;
  padding: 0 16px 2px;
  border-top: 6px solid #fff;
  align-items: center;
}
.menubar button { line-height: 20px; white-space: nowrap; }

.row { display: flex; height: 28px; }
.bar {
  display: flex;
  align-items: center;
  gap: 7px;
  padding-left: 7px;
  border-radius: 3px 5px 5px 3px;
  background: linear-gradient(#eef1f8, #e0e4ed 60%, #cfd4de);
}
.std { padding-right: 21px; }
.text { padding-right: 18px; }
.props { padding-right: 15px; }
.surf { padding-right: 21px; }
.fill { flex: 1; overflow: hidden; }
.grip {
  width: 2px;
  height: 22px;
  margin-right: -2px;
  background: repeating-linear-gradient(#a5abb7 0 2px, transparent 2px 4px);
}
.tb { flex: none; width: 16px; height: 16px; }
.tb svg, .cell svg, .menu svg, .swatch svg { display: block; width: 16px; height: 16px; }
.sep { width: 1px; height: 14px; background: #a9aeb9; box-shadow: 1px 0 #fff; }

.combo {
  display: grid;
  width: 195px;
  height: 22px;
  margin: 0 -1px;
  align-items: center;
  background: #fff;
}
.combo.short { width: 96px; margin-right: 0; }
.combo > * { grid-area: 1 / 1; }
.combo select {
  appearance: none;
  width: 100%;
  height: 22px;
  border: 0;
  background: none;
  font: 10px "Liberation Mono", monospace;
  color: #000;
}
.layer select { padding-left: 90px; font: 11px "Noto Sans", sans-serif; }
.color select { padding-left: 96px; }
.line select { padding-left: 97px; }
.drop {
  justify-self: end;
  width: 15px;
  height: 22px;
  border: 1px solid #e8ebf2;
  background: linear-gradient(#dfe3eb, #cdd2dc);
  pointer-events: none;
}
.drop::after {
  content: "";
  display: block;
  margin: 8px 3px;
  width: 0;
  border: 3px solid transparent;
  border-top: 4px solid #000;
  border-bottom: 0;
}
.swatch { display: flex; align-items: center; gap: 1px; padding-left: 2px; pointer-events: none; }
.box { width: 12px; height: 12px; margin-left: 2px; border: 1px solid #000; }
.box.wide { width: 86px; margin-left: 5px; }
.rule { width: 87px; height: 1px; margin-left: 5px; background: #000; }
.plotstyle {
  width: 45px;
  height: 22px;
  margin-left: -1px;
  padding: 0;
  border: 2px solid #fff;
  border-right: 0;
  outline: 1px solid #999;
  outline-offset: -1px;
  background: #c6c6c6;
  color: #6d6d6d;
  font: 10px "Liberation Mono", monospace;
}

.work { flex: 1; display: flex; min-height: 0; }
.side { display: flex; flex-direction: column; width: 35px; }
.right { border-left: 1px solid #b5bac6; }
.vbar {
  flex: 1;
  display: flex;
  flex-direction: column;
  gap: 6px;
  padding: 3px 0 0 7px;
  border-radius: 4px;
  background: linear-gradient(90deg, #edf1f9, #e2e6f0 50%, #d0d5e0);
}
.right .vbar { padding-left: 6px; }
.vbar.end { flex: none; height: 55px; }
.vgrip {
  width: 27px;
  height: 3px;
  margin-left: -3px;
  background: repeating-linear-gradient(90deg, #a5abb7 0 2px, transparent 2px 4px);
}
.vsep { width: 16px; height: 2px; border-top: 1px solid #a9aeb9; background: #fff; }
.more { width: 5px; height: 1px; margin-left: 7px; background: #2e9a70; }

.palette { width: 27px; padding: 6px 3px 6px 2px; background: #626262; }
.palette-in {
  display: flex;
  flex-direction: column;
  height: 100%;
  border: 1px solid #343434;
  background: linear-gradient(90deg, #919191, #696969);
}
.dots {
  align-self: center;
  width: 16px;
  height: 4px;
  margin-top: 1px;
  background: repeating-linear-gradient(90deg, #222 0 1px, transparent 1px 2px);
}
.palette h2 {
  margin: auto 0;
  writing-mode: vertical-rl;
  text-orientation: sideways;
  transform: rotate(180deg);
  align-self: flex-start;
  font-size: 15px;
  line-height: 16px;
  color: #fff;
}

.doc { flex: 1; display: flex; flex-direction: column; min-width: 0; border-left: 1px solid #9da3b0; }
.tabs {
  display: flex;
  height: 20px;
  padding-left: 3px;
  border-bottom: 1px solid #9da3b0;
  background: linear-gradient(#d0d4dd, #edf0f7);
}
.tab {
  position: relative;
  z-index: 0;
  padding: 0 7px 0 24px;
  font-size: 12px;
  line-height: 17px;
  color: #111;
  background: #8b93a3;
  clip-path: polygon(19px 0, 100% 0, 100% 100%, 0 100%);
}
.tab::before {
  content: "";
  position: absolute;
  inset: 1px 1px 0;
  z-index: -1;
  background: linear-gradient(#f4f6fa, #dfe3ec);
  clip-path: polygon(19px 0, 100% 0, 100% 100%, 0 100%);
}
.tab.on { margin-left: -9px; padding: 0 5px 0 22px; font-weight: 700; }
.tab.on::before { background: #fff; }
.x { margin-left: 8px; font-size: 11px; color: #000; }
.tabmenu {
  margin: 8px 6px 0 auto;
  height: 0;
  border: 5px solid transparent;
  border-top-color: #000;
  border-bottom: 0;
}
.canvas { flex: 1; min-height: 0; border: solid #fff; border-width: 1px 3px 0 2px; background: #000; }
.canvas svg { display: block; width: 100%; height: 100%; }
.canvas text { font: 300 15px Lato, sans-serif; fill: #fff; }
.sheets {
  display: flex;
  height: 20px;
  padding-left: 2px;
  border-bottom: 4px solid #fff;
  background: #efefef;
}
.nav { width: 16px; border: 1px solid #aaa; border-color: #fff #999 #999 #fff; background: #f0f0f0; }
.nav svg { display: block; width: 14px; height: 14px; }
.slash { width: 10px; height: 16px; fill: none; stroke: #111; }
.slash.wide { width: 14px; }
.page { fill: #fff; stroke: none; }
.sheet { padding: 0 3px 0 2px; font: 10px/16px "Liberation Mono", monospace; color: #000; }
.sheet.on { padding: 0; font: bold 12px/18px "Liberation Mono", monospace; background: #fff; }

.strip { height: 6px; margin: 0 17px 0 0; border-bottom: 1px solid #666; background: #d5d9e2; }
.status {
  display: flex;
  height: 22px;
  border-top: 1px solid #999fa9;
  background: linear-gradient(#dcdee3, #b9bdc5 45%, #a9adb5 60%, #c6c9cf);
  color: #27303f;
}
.hint { flex: 1; padding-left: 4px; line-height: 20px; }
.cell {
  display: flex;
  align-items: center;
  gap: 4px;
  height: 21px;
  padding: 0 2px;
  border-right: 1px solid #878d98;
  border-left: 1px solid #dfe1e6;
  font-size: 11px;
}
.cell.off { color: #8f939c; font-size: 12px; }
.size { width: 17px; height: 21px; padding: 3px 1px 0; fill: #7e848e; }

/* popups over the drawing area */
.menu {
  position: absolute;
  padding: 2px 1px 1px;
  border: 1px solid #8d9097;
  background: linear-gradient(90deg, #e9edf7 25px, #bfc3cb 25px 26px, #fafafa 26px);
}
.main-menu { left: 488px; top: 395px; width: 168px; }
.sub-menu { left: 655px; top: 448px; width: 173px; }
.menu button {
  display: grid;
  grid-template-columns: 16px 1fr auto;
  align-items: center;
  column-gap: 10px;
  width: 100%;
  height: 22px;
  padding: 0 5px 0 4px;
  text-align: left;
  white-space: nowrap;
}
.sub-menu button { padding: 0 12px 0 3px; }
.menu span, .menu kbd { padding-bottom: 2px; line-height: 20px; }
.menu hr { height: 1px; margin: 3px 1px 4px 30px; border: 0; background: #bfc1c6; }
.menu .hot {
  border-radius: 2px;
  background: linear-gradient(#fffbe4, #ffeda8 48%, #ffd34b 52%, #ffe48a);
  box-shadow: inset 0 0 0 1px #d8b85c;
}
.menu .checked { background: #ffdf94; box-shadow: 0 0 0 1px #ffdf94, 0 0 0 2px #e8973a; }
.sub { border: 5px solid transparent; border-left-color: #3f4757; border-right: 0; }
.menu kbd { font: 11px/20px "Noto Sans", sans-serif; }

.mark {
  position: absolute;
  right: 10px;
  bottom: 9px;
  margin: 0;
  font: 16px/20px "Liberation Sans", sans-serif;
  color: #a9a9a9;
}
```
